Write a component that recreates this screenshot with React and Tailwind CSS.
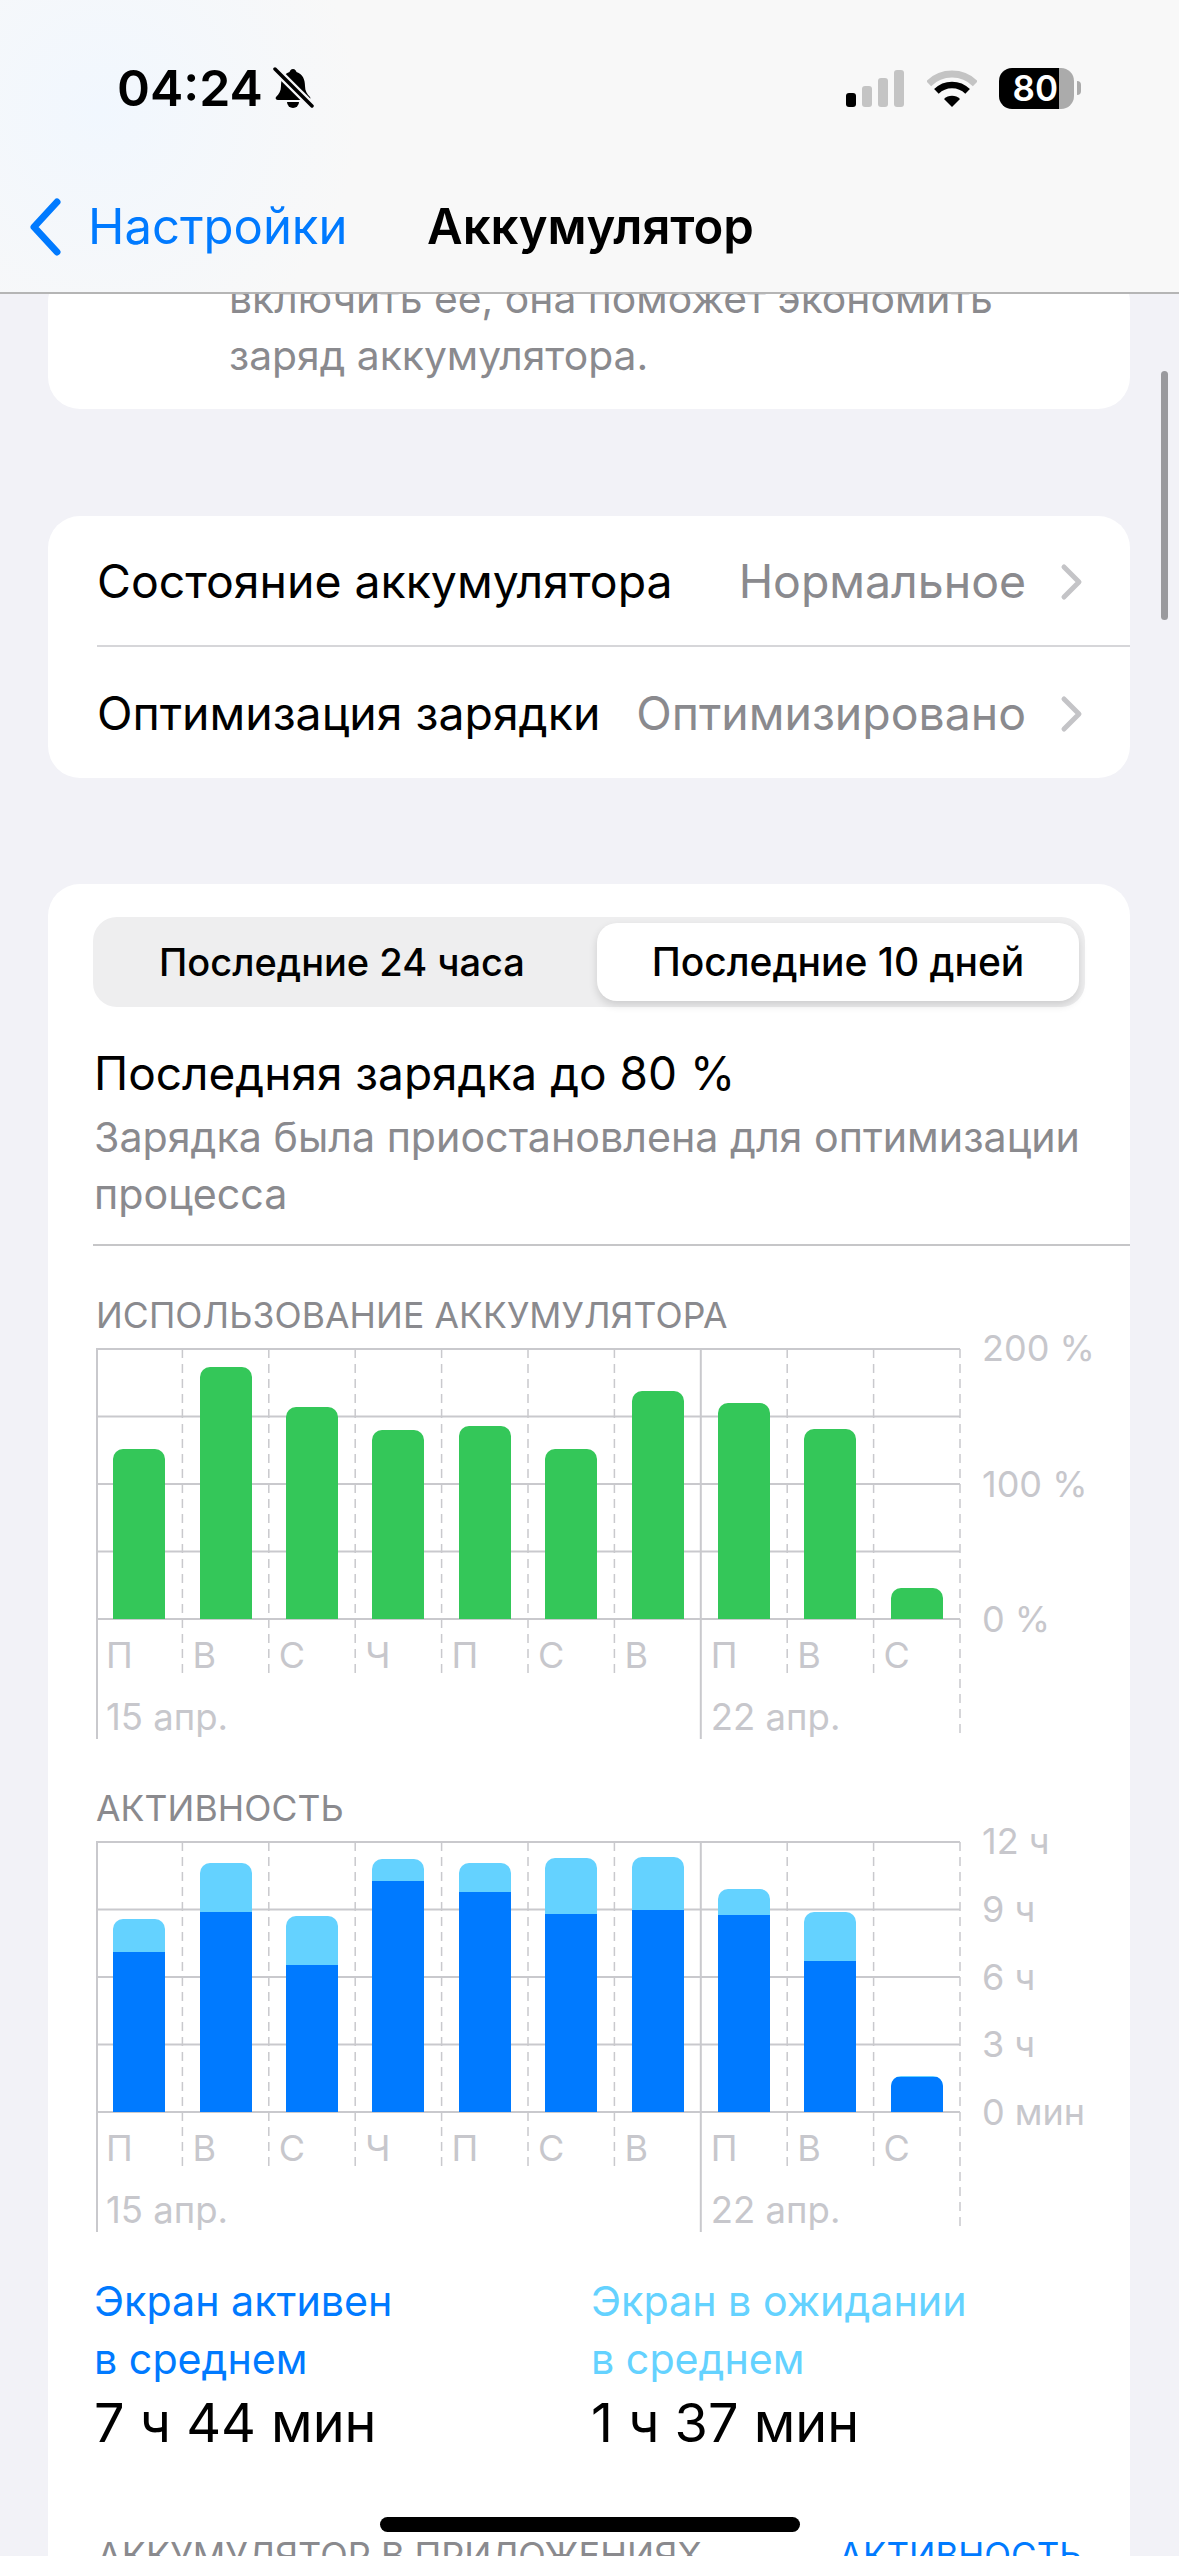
const GRID_COLOR = "#c9c9cd";

const usage = [170, 252, 212, 189, 193, 170, 228, 216, 190, 31];
const activity = [
  [193, 160],
  [249, 200],
  [196, 147],
  [253, 231],
  [249, 220],
  [254, 198],
  [255, 202],
  [223, 197],
  [200, 151],
  [36, 35],
];
const days = ["П", "В", "С", "Ч", "П", "С", "В", "П", "В", "С"];

function ChartLines({ rows }) {
  // horizontal rules plus the dashed/solid day separators
  const step = 270 / rows;
  const colW = 86.4;
  return (
    <svg className="absolute left-0 top-0" width="866" height="392" viewBox="0 0 866 392" fill="none">
      {Array.from({ length: rows + 1 }).map((_, i) => (
        <line key={i} x1="0" x2="864" y1={i * step + 1} y2={i * step + 1} stroke={GRID_COLOR} strokeWidth="2" />
      ))}
      {[1, 2, 3, 4, 5, 6, 8, 9].map((i) => (
        <line key={i} x1={i * colW} x2={i * colW} y1="1" y2="325" stroke={GRID_COLOR} strokeWidth="1.5" strokeDasharray="9 6" />
      ))}
      <line x1="864" x2="864" y1="1" y2="385" stroke={GRID_COLOR} strokeWidth="1.5" strokeDasharray="9 6" />
      <line x1="1" x2="1" y1="0" y2="391" stroke={GRID_COLOR} strokeWidth="2" />
      <line x1={7 * colW} x2={7 * colW} y1="0" y2="391" stroke={GRID_COLOR} strokeWidth="2" />
    </svg>
  );
}

function Chart({ title, labels, children }) {
  return (
    <div>
      <div className="ml-[48px] h-[40px] text-[35.5px] leading-[44px] text-[#8a8a8e] tracking-[0.1px]">{title}</div>
      <div className="mt-[14px] ml-[48px] flex">
        <div className="relative w-[864px] h-[389px]">
          <ChartLines rows={4} />
          <div className="relative grid grid-cols-10 h-[271px] items-end">{children}</div>
          <div className="relative mt-[16px] grid grid-cols-10 h-[40px] text-[36px] leading-[40px] text-[#c7c7cc]">
            {days.map((d, i) => (
              <div key={i} className="pl-[10px]">{d}</div>
            ))}
          </div>
          <div className="relative mt-[22px] grid grid-cols-10 h-[40px] text-[36.5px] leading-[40px] text-[#c7c7cc]">
            <div className="col-span-7 pl-[10px]">15 апр.</div>
            <div className="col-span-3 pl-[10px]">22 апр.</div>
          </div>
        </div>
        <div className="ml-[22px] h-[271px] flex flex-col justify-between text-[36px] text-[#c7c7cc]">
          {labels.map((l) => (
            <div key={l} className="h-0 flex items-center whitespace-nowrap">{l}</div>
          ))}
        </div>
      </div>
    </div>
  );
}

function Row({ label, value, divider }) {
  return (
    <div className="h-[131px] pl-[49px] flex">
      <div className={`flex-1 flex items-center justify-between pt-[3px] pr-[46px] ${divider ? "border-b-2 border-[#d6d6d9]" : ""}`}>
        <span className="text-[46.4px] text-black whitespace-nowrap">{label}</span>
        <span className="flex items-center">
          <span className="text-[46.4px] text-[#8a8a8e] whitespace-nowrap">{value}</span>
          <svg className="ml-[34px]" width="24" height="38" viewBox="0 0 24 38" fill="none">
            <polyline points="4,4 19,19 4,34" stroke="#c4c4c7" strokeWidth="5" strokeLinecap="round" strokeLinejoin="round" />
          </svg>
        </span>
      </div>
    </div>
  );
}

function StatusIcons() {
  return (
    <div className="flex items-center">
      <div className="flex items-end gap-[6px] h-[37px]">
        <div className="w-[10px] h-[14px] rounded-[3px] bg-black" />
        <div className="w-[10px] h-[21px] rounded-[3px] bg-[#c4c4c4]" />
        <div className="w-[10px] h-[29px] rounded-[3px] bg-[#c4c4c4]" />
        <div className="w-[10px] h-[37px] rounded-[3px] bg-[#c4c4c4]" />
      </div>
      <svg className="ml-[23px]" width="50" height="37" viewBox="0 0 50 37" fill="none">
        <path d="M1.7 13.7A33 33 0 0 1 48.3 13.7" stroke="#c4c4c4" strokeWidth="7" />
        <path d="M9.4 21.4A22 22 0 0 1 40.6 21.4" stroke="#000" strokeWidth="6.5" />
        <path d="M25 37L17 29A11.3 11.3 0 0 1 33 29Z" fill="#000" />
      </svg>
      <div className="ml-[22px] flex items-center">
        <div className="w-[75px] h-[41px] rounded-[13px] overflow-hidden flex">
          <div className="w-[60px] bg-black text-white text-[35px] font-semibold leading-[41px] text-right pr-[1px]">80</div>
          <div className="w-[15px] bg-[#ababab]" />
        </div>
        <div className="ml-[3px] w-[4px] h-[14px] rounded-r-[4px] bg-[#ababab]" />
      </div>
    </div>
  );
}

export default function App() {
  return (
    <div className="relative w-[1179px] h-[2556px] overflow-hidden flex flex-col bg-[#f2f2f7] font-['Inter',sans-serif]">
      {/* top bar */}
      <header className="relative z-10 h-[294px] shrink-0 border-b-2 border-[#b5b5b5] bg-[radial-gradient(circle_at_100px_110px,#f1f7fe_0,#f8f8f8_260px)]">
        <div className="pt-[62px] pl-[117px] pr-[98px] h-[114px] flex items-start justify-between">
          <div className="w-full h-[52px] flex items-center justify-between">
            <div className="flex items-center h-[52px]">
              <span className="text-[50px] font-semibold leading-[52px] text-black">04:24</span>
              <svg className="ml-[10px]" width="42" height="42" viewBox="0 0 42 42">
                <path d="M20 2c-2 0-3 1.500-3.500 3C10 7 8 13 8 19c0 5-2 8-5 11-1 1 0 3 2 3h30c2 0 3-2 2-3-3-3-5-6-5-11 0-6-2-12-8.500-14C23 3.500 22 2 20 2z" fill="#000" />
                <path d="M14 35a6 6 0 0 0 12 0z" fill="#000" />
                <line x1="1" y1="1" x2="40" y2="40" stroke="#f6f7f9" strokeWidth="8" />
                <line x1="2" y1="2" x2="39" y2="39" stroke="#000" strokeWidth="3.500" strokeLinecap="round" />
              </svg>
            </div>
            <StatusIcons />
          </div>
        </div>
        <div className="mt-[83px] h-[60px] flex items-center pl-[28px]">
          <div className="w-[399px] flex items-center">
            <svg width="34" height="60" viewBox="0 0 34 60" fill="none">
              <polyline points="29,5 6,30 29,55" stroke="#007aff" strokeWidth="7" strokeLinecap="round" strokeLinejoin="round" />
            </svg>
            <span className="ml-[26px] text-[49px] text-[#007aff] whitespace-nowrap">Настройки</span>
          </div>
          <span className="text-[49px] font-semibold text-black whitespace-nowrap">Аккумулятор</span>
        </div>
      </header>

      <main className="flex-1 overflow-hidden">
        {/* tail of the card scrolled under the header */}
        <div className="-mt-[24px] ml-[48px] mr-[49px] bg-white rounded-[32px] pl-[181px] pb-[25px] text-[40.8px] leading-[57px] text-[#8a8a8e]">
          <div>включить ее, она поможет экономить</div>
          <div>заряд аккумулятора.</div>
        </div>

        <div className="mt-[107px] ml-[48px] mr-[49px] bg-white rounded-[32px] overflow-hidden">
          <Row label="Состояние аккумулятора" value="Нормальное" divider />
          <Row label="Оптимизация зарядки" value="Оптимизировано" />
        </div>

        <div className="mt-[106px] ml-[48px] mr-[49px] bg-white rounded-t-[32px] pt-[33px]">
          <div className="ml-[45px] mr-[45px] h-[90px] rounded-[24px] bg-[#eeeeef] flex p-[6px]">
            <div className="w-[498px] pr-[12px] flex items-center justify-center text-[38px] font-medium text-black whitespace-nowrap">Последние 24 часа</div>
            <div className="flex-1 rounded-[20px] bg-white shadow-[0_4px_8px_rgba(0,0,0,0.14)] flex items-center justify-center text-[39px] font-medium text-black whitespace-nowrap">Последние 10 дней</div>
          </div>

          <div className="mt-[38px] pl-[46px] text-[46px] leading-[57px] text-black">Последняя зарядка до 80 %</div>
          <div className="mt-[7px] pl-[46px] pr-[30px] text-[41.2px] leading-[57px] text-[#8a8a8e]">
            <div className="whitespace-nowrap">Зарядка была приостановлена для оптимизации</div>
            <div>процесса</div>
          </div>
          <div className="mt-[21px] ml-[45px] h-[2px] bg-[#c6c6c8]" />

          <div className="mt-[48px]">
            <Chart title="ИСПОЛЬЗОВАНИЕ АККУМУЛЯТОРА" labels={["200 %", "100 %", "0 %"]}>
              {usage.map((h, i) => (
                <div key={i} className="mx-auto w-[52px] rounded-t-[10px] bg-[#34c759]" style={{ height: h }} />
              ))}
            </Chart>
          </div>

          <div className="mt-[50px]">
            <Chart title="АКТИВНОСТЬ" labels={["12 ч", "9 ч", "6 ч", "3 ч", "0 мин"]}>
              {activity.map(([total, active], i) => (
                <div key={i} className="mx-auto w-[52px] rounded-t-[10px] overflow-hidden bg-[#64d2ff] flex flex-col justify-end" style={{ height: total }}>
                  <div className="bg-[#007aff]" style={{ height: active }} />
                </div>
              ))}
            </Chart>
          </div>

          <div className="mt-[42px] pl-[46px] flex">
            <div className="w-[497px]">
              <div className="text-[41.2px] leading-[58px] text-[#007aff]">Экран активен<br />в среднем</div>
              <div className="mt-[3px] text-[54px] leading-[64px] text-black">7 ч 44 мин</div>
            </div>
            <div>
              <div className="text-[41.2px] leading-[58px] text-[#64d2ff]">Экран в ожидании<br />в среднем</div>
              <div className="mt-[3px] text-[54px] leading-[64px] text-black">1 ч 37 мин</div>
            </div>
          </div>

          <div className="mt-[80px] pl-[49px] pr-[48px] flex justify-between items-start text-[36px] leading-[40px] whitespace-nowrap">
            <span className="text-[#8a8a8e]">АККУМУЛЯТОР В ПРИЛОЖЕНИЯХ</span>
            <span className="text-[35px] text-[#007aff]">АКТИВНОСТЬ</span>
          </div>
        </div>
      </main>

      {/* scroll indicator and home bar float over the page */}
      <div className="absolute left-[1161px] top-[371px] w-[7px] h-[249px] rounded-full bg-[#9a9a9e] z-20" />
      <div className="absolute left-[380px] top-[2517px] w-[420px] h-[15px] rounded-full bg-black z-20" />
    </div>
  );
}
